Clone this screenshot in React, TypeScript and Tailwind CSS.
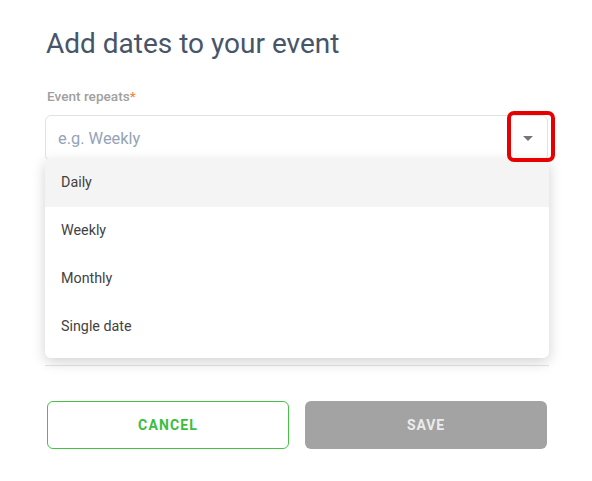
import React from "react";

const options = ["Daily", "Weekly", "Monthly", "Single date"];

export default function App() {
  return (
    <div className="min-h-[481px] w-[592px] bg-white font-['Roboto',sans-serif]">
      <div className="px-[45px] pt-[26px]">
        <h1 className="text-[28px] leading-[36px] text-[#475569] pl-[1px]">Add dates to your event</h1>

        <div className="mt-[26px] pl-[2px] text-[13.6px] leading-[16px] font-medium text-[#a0a0a0]">
          Event repeats<span className="text-[#f5873d]">*</span>
        </div>

        <div className="relative mt-[11px]">
          <div className="flex h-[46px] w-[503px] items-center rounded-[6px] border border-[#e2e2e2] pl-[12px] pr-[12px] pt-[2px]">
            <span className="flex-1 text-[16.4px] text-[#94a3b8]">e.g. Weekly</span>
            <svg width="10" height="6" viewBox="0 0 10 6" className="mr-[2px]">
              <path d="M0 0 L10 0 L5 5 Z" fill="#757575" />
            </svg>
          </div>

          {/* highlight around the arrow */}
          <div className="absolute left-[462px] top-[-4px] z-20 h-[51px] w-[48px] rounded-[7px] border-[4px] border-[#e60000]" />

          <div className="h-[205px] w-[504px] border-b border-[#dfe8df]" />

          <ul className="absolute left-0 top-[44px] z-10 w-[504px] overflow-hidden rounded-b-[6px] bg-white pb-[7px] shadow-[0_4px_14px_rgba(0,0,0,0.18)]">
            {options.map((o, i) => (
              <li
                key={o}
                className={`flex h-[48px] items-center pl-[16px] text-[14.3px] text-[#424242] ${i === 0 ? "bg-[#f4f4f4]" : ""}`}
              >
                {o}
              </li>
            ))}
          </ul>
        </div>

        <div className="mt-[35px] flex gap-[16px] pl-[2px]">
          <button className="flex h-[48px] w-[242px] items-center justify-center rounded-[6px] border border-[#45c245] text-[14px] font-bold tracking-[0.08em] text-[#3dbd3d]">
            CANCEL
          </button>
          <button className="flex h-[48px] w-[242px] items-center justify-center rounded-[6px] bg-[#a3a3a3] text-[14px] font-bold tracking-[0.06em] text-[#ececec]">
            SAVE
          </button>
        </div>
      </div>
    </div>
  );
}
